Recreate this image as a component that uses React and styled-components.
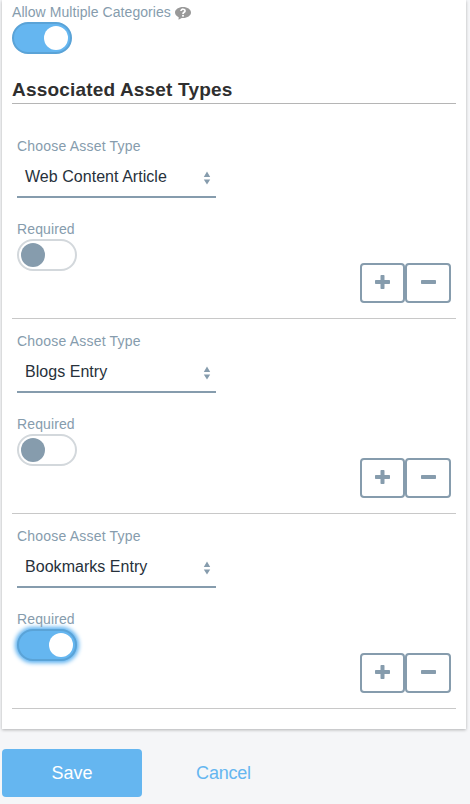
import React, { useState } from "react";
import styled, { createGlobalStyle, css } from "styled-components";

const slate = "#869cad";
const blue = "#65b6f0";

const GlobalStyle = createGlobalStyle`
  * { box-sizing: border-box; }
  body {
    margin: 0;
    background: #f5f6f8;
    font-family: "Liberation Sans", Arial, sans-serif;
  }
`;

const Page = styled.main`
  height: 804px;
  padding: 0 4px 0 2px;
  overflow: hidden;
`;

const Panel = styled.section`
  height: 729px;
  padding: 4px 10px 0;
  background: #fff;
  box-shadow: 0 1px 3px rgba(0, 0, 0, 0.28);
`;

const Label = styled.div`
  display: flex;
  align-items: center;
  gap: 4px;
  height: 16px;
  font-size: 14px;
  line-height: 16px;
  letter-spacing: ${(p) => p.$spacing || "0.2px"};
  color: ${slate};
  white-space: nowrap;
`;

const HelpIcon = styled.svg`
  display: block;
  width: 16px;
  height: 13px;
  margin-top: 2px;
`;

const Track = styled.button`
  display: flex;
  align-items: center;
  justify-content: ${(p) => (p.$on ? "flex-end" : "flex-start")};
  width: 60px;
  height: 32px;
  margin: 2px 0 0;
  padding: 0 2px;
  border: 2px solid ${(p) => (p.$on ? "#5aa3d7" : "#d3d8dc")};
  border-radius: 16px;
  background: ${(p) => (p.$on ? blue : "#fff")};
  outline: none;
  ${(p) =>
    p.$focused &&
    css`
      box-shadow: 0 0 4px 2px #5cb1f0;
    `}
`;

const Knob = styled.span`
  width: 24px;
  height: 24px;
  border-radius: 50%;
  background: ${(p) => (p.$on ? "#fff" : slate)};
`;

const Heading = styled.h3`
  height: 29px;
  margin: 21px 0 20px;
  border-bottom: 1px solid #b5b5b5;
  font-size: 19px;
  line-height: 29px;
  letter-spacing: 0.18px;
  color: #2f2f2f;
  white-space: nowrap;
`;

const AssetRow = styled.div`
  display: flex;
  justify-content: space-between;
  height: 195px;
  padding: 14px 5px 15px;
  border-bottom: 1px solid #c8c8c8;
`;

const Fields = styled.div`
  width: 199px;
`;

const SelectField = styled.div`
  display: flex;
  align-items: center;
  justify-content: space-between;
  height: 44px;
  margin-bottom: 23px;
  padding: 4px 5px 0 8px;
  border-bottom: 2px solid ${slate};
  font-size: 16px;
  letter-spacing: 0.04px;
  color: #27313b;
  white-space: nowrap;
`;

const Arrows = styled.svg`
  display: block;
  width: 8px;
  height: 14px;
  margin-top: 2px;
`;

const RowActions = styled.div`
  display: flex;
  align-self: flex-end;
`;

const SquareButton = styled.button`
  display: flex;
  align-items: center;
  justify-content: center;
  width: ${(p) => p.$width}px;
  height: 40px;
  padding: 0 0 2px;
  border: 2px solid ${slate};
  border-radius: 4px;
  background: #fff;
`;

const Glyph = styled.svg`
  display: block;
  width: 15px;
  height: 14px;
`;

const Footer = styled.footer`
  display: flex;
  margin-top: 20px;
`;

const FooterButton = styled.button`
  height: 48px;
  width: ${(p) => (p.$primary ? "140px" : "163px")};
  padding: 0;
  border: 0;
  border-radius: 4px;
  background: ${(p) => (p.$primary ? blue : "transparent")};
  color: ${(p) => (p.$primary ? "#fff" : blue)};
  font: 18px "Liberation Sans", Arial, sans-serif;
  letter-spacing: ${(p) => (p.$primary ? "0" : "-0.2px")};
`;

function Toggle({ label, initial = false, focused = false }) {
  const [on, setOn] = useState(initial);
  return (
    <Track
      type="button"
      role="switch"
      aria-label={label}
      aria-checked={on}
      $on={on}
      $focused={focused}
      onClick={() => setOn(!on)}
    >
      <Knob $on={on} />
    </Track>
  );
}

function AssetType({ name, required }) {
  return (
    <AssetRow>
      <Fields>
        <Label>Choose Asset Type</Label>
        <SelectField>
          {name}
          <Arrows viewBox="0 0 8 14">
            <path d="M4 0.5 7.2 6H0.8ZM4 13.5 0.8 8.5H7.2Z" fill={slate} />
          </Arrows>
        </SelectField>
        <Label $spacing="0.12px">Required</Label>
        <Toggle label="Required" initial={required} focused={required} />
      </Fields>
      <RowActions>
        <SquareButton type="button" aria-label="Add" $width={45}>
          <Glyph viewBox="0 0 15 14">
            <path
              d="M6.300 0h2.400q.8 0 .8.8V5h4.700q.8 0 .8.8v2.400q0 .8-.8.8H9.500v4.200q0 .8-.8.8H6.300q-.8 0-.8-.8V9H.8Q0 9 0 8.200V5.800Q0 5 .8 5h4.700V.8q0-.8.8-.8Z"
              fill={slate}
            />
          </Glyph>
        </SquareButton>
        <SquareButton type="button" aria-label="Remove" $width={46}>
          <Glyph viewBox="0 0 15 14">
            <rect y="5" width="15" height="4" rx="0.8" fill={slate} />
          </Glyph>
        </SquareButton>
      </RowActions>
    </AssetRow>
  );
}

const assets = [
  { name: "Web Content Article", required: false },
  { name: "Blogs Entry", required: false },
  { name: "Bookmarks Entry", required: true },
];

export default function App() {
  return (
    <>
      <GlobalStyle />
      <Page>
        <Panel>
          <Label $spacing="0.07px">
            Allow Multiple Categories
            <HelpIcon viewBox="0 0 16 13">
              <path
                d="M8 0C3.600 0 0 2.400 0 5.500c0 2 1.500 3.700 3.700 4.700L3.500 12.800 6.700 11H8c4.400 0 8-2.400 8-5.500S12.400 0 8 0Z"
                fill="#999"
              />
              <path
                d="M6 4.100C6 1.500 10.300 1.700 10 4.100 9.800 5.400 8 5.300 8 6.900"
                fill="none"
                stroke="#fff"
                strokeWidth="1.7"
              />
              <rect x="7.100" y="7.900" width="1.800" height="1.700" fill="#fff" />
            </HelpIcon>
          </Label>
          <Toggle label="Allow Multiple Categories" initial />
          <Heading>Associated Asset Types</Heading>
          {assets.map((asset) => (
            <AssetType key={asset.name} {...asset} />
          ))}
        </Panel>
        <Footer>
          <FooterButton type="button" $primary>
            Save
          </FooterButton>
          <FooterButton type="button">Cancel</FooterButton>
        </Footer>
      </Page>
    </>
  );
}
